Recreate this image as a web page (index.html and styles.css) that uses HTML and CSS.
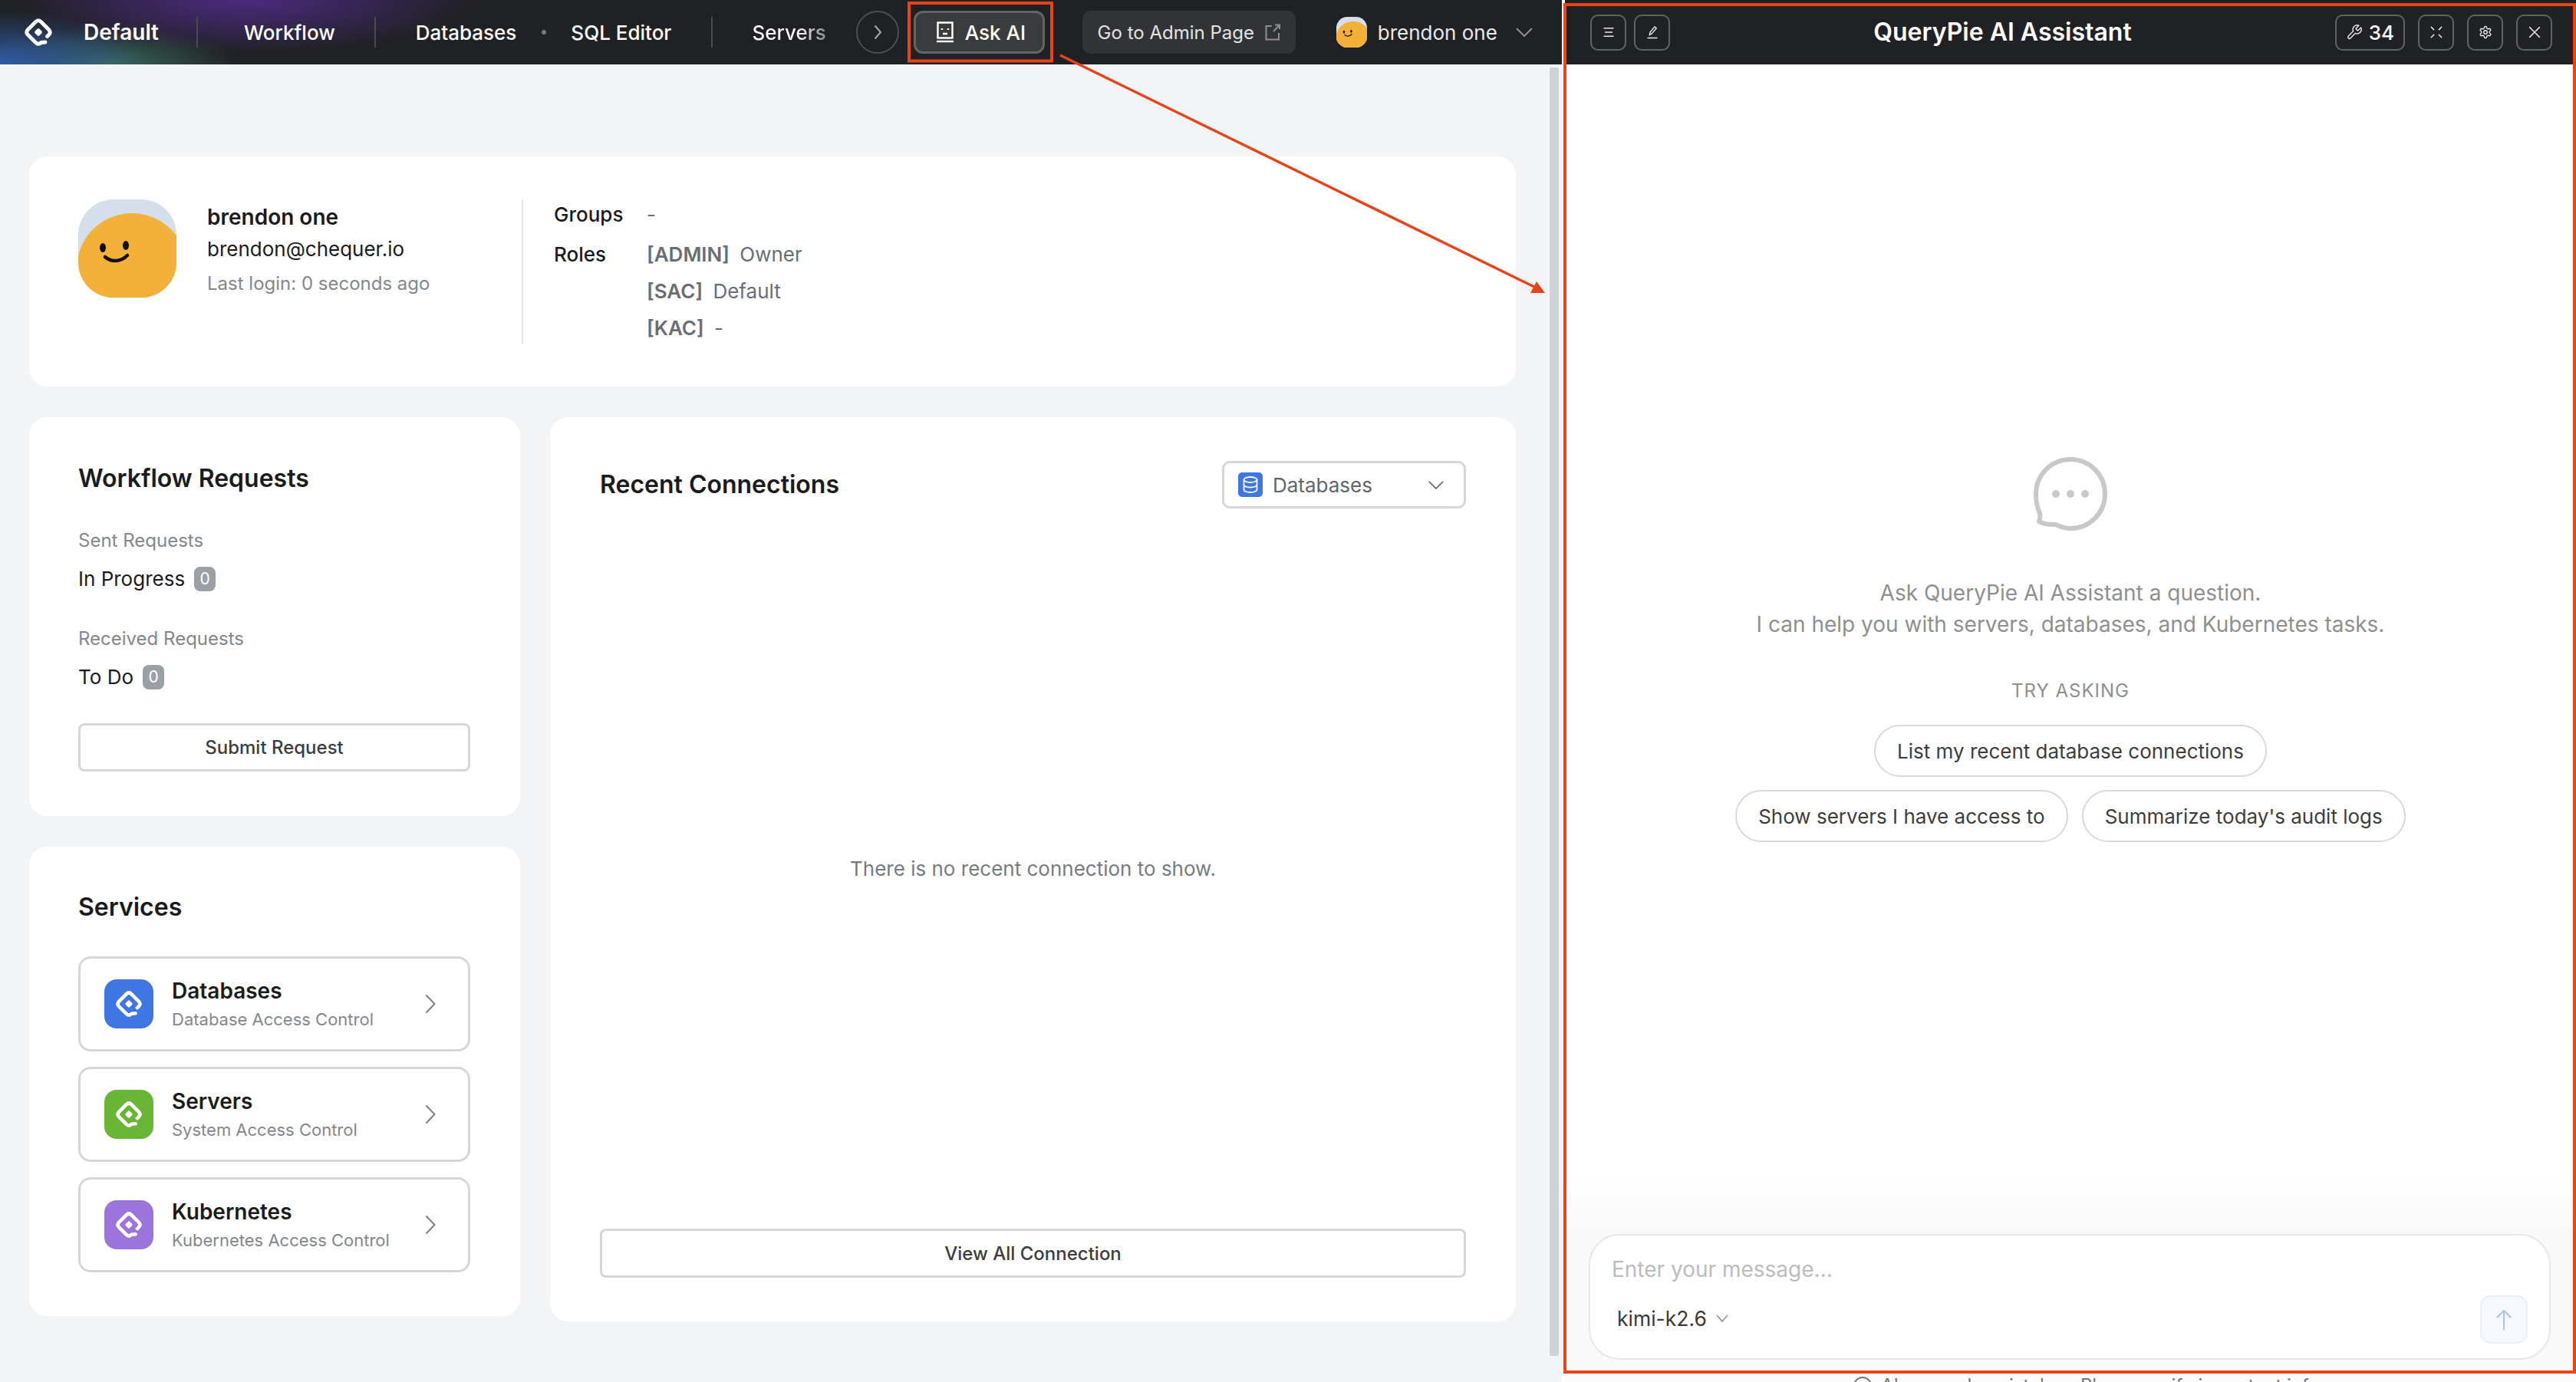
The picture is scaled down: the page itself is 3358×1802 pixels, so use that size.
FILE: index.html
```html
<!DOCTYPE html>
<html lang="en">
<head>
<meta charset="utf-8">
<title>QueryPie</title>
<link rel="stylesheet" href="styles.css">
</head>
<body>
<svg class="defs" width="0" height="0" aria-hidden="true">
  <defs>
    <symbol id="qp" viewBox="0 0 40 40">
      <path d="M29 33L23.500 33.500Q20 37 16.500 33.500L6.500 23.500Q3 20 6.500 16.500L16.500 6.500Q20 3 23.500 6.500L33.500 16.500Q37 20 33.500 23.500L31.500 25.500" fill="none" stroke="currentColor" stroke-width="4.800" stroke-linecap="round" stroke-linejoin="round"/>
      <rect x="16" y="16" width="8" height="8" rx="2" transform="rotate(45 20 20)" fill="currentColor"/>
    </symbol>
    <clipPath id="avatarClip"><rect width="128" height="128" rx="46"/></clipPath>
    <symbol id="face" viewBox="0 0 128 128">
      <g clip-path="url(#avatarClip)">
        <rect width="128" height="128" fill="#d5dfeb"/>
        <circle cx="70" cy="90" r="72" fill="#f3b13a"/>
        <rect y="90" width="128" height="38" fill="#f3b13a"/>
        <ellipse cx="32" cy="63" rx="4" ry="6" fill="#111"/>
        <ellipse cx="62" cy="60" rx="4" ry="6" fill="#111"/>
        <path d="M35 75c8 7 20 7 29-2" fill="none" stroke="#111" stroke-width="4.500" stroke-linecap="round"/>
      </g>
    </symbol>
  </defs>
</svg>

<div class="app">
  <section class="console">
    <header class="topbar">
      <svg class="logo"><use href="#qp"/></svg>
      <span class="nav-item nav-first">Default</span>
      <span class="nav-sep nav-sep-first"></span>
      <span class="nav-item">Workflow</span>
      <span class="nav-sep"></span>
      <span class="nav-item">Databases</span>
      <span class="nav-dot"></span>
      <span class="nav-item">SQL Editor</span>
      <span class="nav-sep"></span>
      <span class="nav-item nav-fade">Servers</span>
      <span class="nav-more">
        <svg viewBox="0 0 24 24"><path d="M8.500 3.500L16 12l-7.500 8.500"/></svg>
      </span>
      <button class="ask-btn">
        <svg viewBox="0 0 24 28"><path class="line" d="M2.500 1.500h19v20h-19z"/><path class="line" d="M1 26h22"/><path class="line" d="M8 9v2M16 9v2M9 16h6"/></svg>
        Ask AI
      </button>
      <button class="admin-btn">
        Go to Admin Page
        <svg viewBox="0 0 20 22"><path d="M9 3H1.500v17.500h16.500V12M11 10l8-8.500M13 1.500h6V7"/></svg>
      </button>
      <svg class="mini-avatar"><use href="#face"/></svg>
      <span class="user-name">brendon one</span>
      <svg class="user-caret" viewBox="0 0 22 12"><path d="M1 1l10 10L21 1"/></svg>
    </header>

    <main class="page">
      <div class="scroll-thumb"></div>

      <section class="card profile">
        <svg class="avatar"><use href="#face"/></svg>
        <div class="who">
          <div class="who-name">brendon one</div>
          <div class="who-mail">brendon@chequer.io</div>
          <div class="who-last">Last login: 0 seconds ago</div>
        </div>
        <div class="info">
          <div class="info-label">Groups</div>
          <div class="info-value">-</div>
          <div class="info-label info-gap">Roles</div>
          <div class="info-roles info-gap">
            <div class="info-value"><b>[ADMIN]</b> Owner</div>
            <div class="info-value"><b>[SAC]</b> Default</div>
            <div class="info-value"><b>[KAC]</b> -</div>
          </div>
        </div>
      </section>

      <div class="columns">
        <div class="col-left">
          <section class="card requests">
            <h2 class="card-title">Workflow Requests</h2>
            <div class="req-label">Sent Requests</div>
            <div class="req-row">In Progress <span class="badge">0</span></div>
            <div class="req-label req-label-2">Received Requests</div>
            <div class="req-row">To Do <span class="badge">0</span></div>
            <button class="outline-btn submit">Submit Request</button>
          </section>

          <section class="card services">
            <h2 class="card-title">Services</h2>
            <div class="svc-list">
              <a class="svc">
                <span class="svc-icon svc-blue"><svg><use href="#qp"/></svg></span>
                <span class="svc-text"><strong>Databases</strong><small>Database Access Control</small></span>
                <svg class="svc-arrow" viewBox="0 0 14 26"><path d="M1.500 1.500L12.500 13 1.500 24.500"/></svg>
              </a>
              <a class="svc">
                <span class="svc-icon svc-green"><svg><use href="#qp"/></svg></span>
                <span class="svc-text"><strong>Servers</strong><small>System Access Control</small></span>
                <svg class="svc-arrow" viewBox="0 0 14 26"><path d="M1.500 1.500L12.500 13 1.500 24.500"/></svg>
              </a>
              <a class="svc">
                <span class="svc-icon svc-purple"><svg><use href="#qp"/></svg></span>
                <span class="svc-text"><strong>Kubernetes</strong><small>Kubernetes Access Control</small></span>
                <svg class="svc-arrow" viewBox="0 0 14 26"><path d="M1.500 1.500L12.500 13 1.500 24.500"/></svg>
              </a>
            </div>
          </section>
        </div>

        <section class="card recent">
          <div class="recent-head">
            <h2 class="card-title">Recent Connections</h2>
            <div class="select">
              <span class="select-icon">
                <svg viewBox="0 0 32 32"><ellipse cx="16" cy="9.500" rx="8.500" ry="3.500"/><path d="M7.500 9.500v13c0 2 3.800 3.500 8.500 3.500s8.500-1.500 8.500-3.500v-13M7.500 16c0 2 3.800 3.500 8.500 3.500s8.500-1.500 8.500-3.500"/></svg>
              </span>
              <span class="select-text">Databases</span>
              <svg class="select-caret" viewBox="0 0 22 12"><path d="M1 1l10 10L21 1"/></svg>
            </div>
          </div>
          <div class="recent-empty">There is no recent connection to show.</div>
          <button class="outline-btn">View All Connection</button>
        </section>
      </div>
    </main>
  </section>

  <aside class="assistant">
    <header class="as-head">
      <div class="as-tools">
        <button class="tool"><svg viewBox="0 0 24 24"><path d="M4 5h16M6 12h12M4 19h16"/></svg></button>
        <button class="tool"><svg viewBox="0 0 24 24"><path d="M4 22h16M7 17l1-5L16 2.500l3 2.500-8 9.500z"/></svg></button>
      </div>
      <h1 class="as-title">QueryPie AI Assistant</h1>
      <div class="as-tools as-tools-right">
        <button class="tool tool-count"><svg class="wrench" viewBox="0 0 24 24"><path d="M14.700 6.300a1 1 0 0 0 0 1.400l1.600 1.600a1 1 0 0 0 1.400 0l3.770-3.770a6 6 0 0 1-7.940 7.940l-6.910 6.910a2.120 2.120 0 0 1-3-3l6.910-6.910a6 6 0 0 1 7.940-7.940l-3.760 3.760z"/></svg>34</button>
        <button class="tool"><svg viewBox="0 0 24 24"><path d="M3 3l4.500 4.500M21 3l-4.500 4.500M3 21l4.500-4.500M21 21l-4.500-4.500"/></svg></button>
        <button class="tool"><svg viewBox="0 0 24 24"><path d="M12.220 2h-.44a2 2 0 0 0-2 2v.18a2 2 0 0 1-1 1.730l-.43.250a2 2 0 0 1-2 0l-.15-.08a2 2 0 0 0-2.730.730l-.22.380a2 2 0 0 0 .730 2.730l.15.100a2 2 0 0 1 1 1.720v.510a2 2 0 0 1-1 1.740l-.15.090a2 2 0 0 0-.730 2.730l.22.380a2 2 0 0 0 2.730.730l.15-.08a2 2 0 0 1 2 0l.43.250a2 2 0 0 1 1 1.730V20a2 2 0 0 0 2 2h.44a2 2 0 0 0 2-2v-.18a2 2 0 0 1 1-1.730l.43-.25a2 2 0 0 1 2 0l.15.08a2 2 0 0 0 2.730-.73l.22-.39a2 2 0 0 0-.73-2.730l-.15-.08a2 2 0 0 1-1-1.740v-.5a2 2 0 0 1 1-1.740l.15-.09a2 2 0 0 0 .73-2.730l-.22-.38a2 2 0 0 0-2.730-.73l-.15.08a2 2 0 0 1-2 0l-.43-.25a2 2 0 0 1-1-1.730V4a2 2 0 0 0-2-2z"/><circle cx="12" cy="12" r="3"/></svg></button>
        <button class="tool"><svg viewBox="0 0 24 24"><path d="M3.500 3.500l17 17M20.500 3.500l-17 17"/></svg></button>
      </div>
    </header>

    <div class="as-body">
      <svg class="bubble" viewBox="0 0 96 96">
        <path d="M7 84c3-8 .8-11-1-16C3.500 61 3 55 3 48 3 23 23 3 48 3s45 20 45 45-20 45-45 45c-8 0-13-2-19-5-6 0-16 0-22-4z" fill="none" stroke="#c8c8c8" stroke-width="6" stroke-linejoin="round"/>
        <circle cx="29" cy="48" r="5" fill="#c8c8c8"/><circle cx="48" cy="48" r="5" fill="#c8c8c8"/><circle cx="67" cy="48" r="5" fill="#c8c8c8"/>
      </svg>
      <p class="as-intro">Ask QueryPie AI Assistant a question.<br>I can help you with servers, databases, and Kubernetes tasks.</p>
      <div class="as-try">TRY ASKING</div>
      <div class="chips">
        <button class="chip">List my recent database connections</button>
        <button class="chip">Show servers I have access to</button>
        <button class="chip">Summarize today's audit logs</button>
      </div>
    </div>

    <div class="as-foot">
      <div class="composer">
        <div class="composer-input">Enter your message...</div>
        <div class="composer-row">
          <span class="model">kimi-k2.6
            <svg viewBox="0 0 16 10"><path d="M1 1l7 8 7-8"/></svg>
          </span>
          <button class="send"><svg viewBox="0 0 22 28"><path d="M11 27V2M2 11l9-9 9 9"/></svg></button>
        </div>
      </div>
    </div>
    <div class="as-note"><span class="note-icon"></span>AI can make mistakes. Please verify important info.</div>
  </aside>
</div>

<svg class="marks" viewBox="0 0 3358 1802" aria-hidden="true">
  <rect class="mark-box" x="1185" y="4" width="186" height="75.500"/>
  <rect class="mark-box" x="2040" y="6" width="1316" height="1783"/>
  <line class="mark-line" x1="1382" y1="72" x2="2006" y2="377"/>
  <polygon class="mark-head" points="2003,367 2014,382 1995,382"/>
</svg>
</body>
</html>
```
FILE: styles.css
```css
* { box-sizing: border-box; }
html, body { margin: 0; height: 100%; }
body {
  width: 3358px;
  height: 1802px;
  overflow: hidden;
  position: relative;
  background: #fff;
  font-family: Inter, "Liberation Sans", sans-serif;
  color: #1a1b1d;
}
button { font: inherit; cursor: pointer; }
h1, h2, p { margin: 0; }
.defs { position: absolute; }

.app { display: flex; height: 1802px; }
.console { width: 2036px; display: flex; flex-direction: column; background: #f3f4f6; }

/* top bar */
.topbar {
  height: 84px;
  flex: none;
  display: flex;
  align-items: center;
  padding-left: 30px;
  color: #fff;
  font-size: 26px;
  font-weight: 500;
  background:
    radial-gradient(ellipse 300px 70px at 320px 0, #4b2b80 0%, rgba(75,43,128,0) 100%),
    radial-gradient(ellipse 190px 70px at 0 84px, #2f5ca8 0%, rgba(47,92,168,0) 100%),
    radial-gradient(ellipse 170px 50px at 140px 84px, #3a6a5e 0%, rgba(58,106,94,0) 100%),
    #202124;
}
.logo { width: 40px; height: 40px; color: #fff; flex: none; }
.nav-item { white-space: nowrap; }
.nav-first { margin-left: 39px; font-size: 28px; font-weight: 600; }
.nav-sep { width: 2px; height: 40px; background: #4a4b4e; margin: 0 51.500px; flex: none; }
.nav-sep-first { margin: 0 60px 0 49px; }
.nav-dot { width: 6px; height: 6px; border-radius: 50%; background: #77787b; margin: 0 32.500px; flex: none; }
.nav-fade {
  background: linear-gradient(90deg, #fff 60%, #8a8b8e 100%);
  -webkit-background-clip: text;
  background-clip: text;
  color: transparent;
}
.nav-more {
  width: 56px; height: 56px;
  margin-left: 39px;
  border: 2px solid #4d4e51;
  border-radius: 50%;
  display: flex; align-items: center; justify-content: center;
  flex: none;
}
.nav-more svg { width: 24px; height: 24px; fill: none; stroke: #a8a9ab; stroke-width: 2; }
.ask-btn {
  width: 171px; height: 56px;
  margin-left: 19px;
  display: flex; align-items: center; gap: 14px;
  padding: 0 0 0 26px;
  border: 3px solid #636466;
  border-radius: 12px;
  background: #3a3b3d;
  color: #fff;
  font-weight: 500;
  flex: none;
}
.ask-btn svg { width: 24px; height: 28px; fill: none; stroke: #fff; stroke-width: 2.400; }
.admin-btn {
  width: 278px; height: 56px;
  margin-left: 49px;
  display: flex; align-items: center; justify-content: center; gap: 14px;
  border: 0;
  border-radius: 10px;
  background: #323336;
  color: #e2e3e5;
  font-size: 24px;
  font-weight: 400;
  flex: none;
}
.admin-btn svg { width: 20px; height: 22px; fill: none; stroke: #8f9093; stroke-width: 2; }
.mini-avatar { width: 40px; height: 40px; margin-left: 53px; flex: none; }
.user-name { margin-left: 14px; color: #e8e9eb; font-weight: 400; white-space: nowrap; }
.user-caret { width: 22px; height: 12px; margin-left: 24px; fill: none; stroke: #8f9093; stroke-width: 2; flex: none; }

/* page */
.page { position: relative; flex: 1; padding: 120px 60px 0 38px; }
.scroll-thumb {
  position: absolute; top: 4px; right: 4px;
  width: 12px; height: 1680px;
  background: #d1d2d4;
  border-radius: 2px;
}
.card { background: #fff; border-radius: 24px; }

.profile { height: 300px; padding: 56px 64px; display: flex; align-items: flex-start; margin-bottom: 40px; }
.avatar { width: 128px; height: 128px; flex: none; }
.who { width: 410px; margin-left: 40px; }
.who-name { font-size: 28px; font-weight: 600; line-height: 46px; }
.who-mail { font-size: 26px; line-height: 38px; }
.who-last { font-size: 24px; line-height: 40px; margin-top: 6px; color: #83878d; }
.info {
  border-left: 2px solid #e6e7ea;
  padding-left: 40px;
  display: grid;
  grid-template-columns: 121px auto;
  font-size: 26px;
  line-height: 40px;
}
.info-label { font-weight: 500; }
.info-gap { margin-top: 12px; }
.info-roles { display: flex; flex-direction: column; gap: 8px; }
.info-value { color: #6a6e74; }
.info-value b { font-weight: 600; margin-right: 6px; }

.columns { display: flex; gap: 39px; align-items: flex-start; }
.col-left { width: 640px; display: flex; flex-direction: column; gap: 40px; flex: none; }
.card-title { font-size: 32px; font-weight: 600; line-height: 44px; }

.requests { height: 520px; padding: 58px 65px 0 64px; }
.req-label { font-size: 24px; line-height: 36px; margin-top: 41px; color: #83878d; }
.req-label-2 { margin-top: 40px; }
.req-row { display: flex; align-items: center; gap: 12px; font-size: 26px; line-height: 40px; margin-top: 12px; font-weight: 400; }
.badge {
  min-width: 28px; height: 32px;
  display: inline-flex; align-items: center; justify-content: center;
  border-radius: 8px;
  background: #9b9fa6;
  color: #fff;
  font-size: 21px;
}
.outline-btn {
  display: block;
  width: 100%;
  height: 64px;
  border: 3px solid #d5d6da;
  border-radius: 8px;
  background: #fff;
  color: #3b3d40;
  font-size: 24px;
  font-weight: 500;
}
.submit { height: 63px; margin-top: 40px; }

.services { height: 612px; padding: 57px 65px 0 64px; }
.svc-list { display: flex; flex-direction: column; gap: 20px; margin-top: 42px; }
.svc {
  height: 124px;
  display: flex; align-items: center;
  padding: 0 42px 0 31px;
  border: 3px solid #d5d6da;
  border-radius: 16px;
}
.svc-icon {
  width: 64px; height: 64px;
  border-radius: 16px;
  display: flex; align-items: center; justify-content: center;
  color: #fff;
  flex: none;
}
.svc-icon svg { width: 38px; height: 38px; }
.svc-blue { background: #3f76e4; }
.svc-green { background: #69b535; }
.svc-purple { background: #9b74dc; }
.svc-text { margin-left: 24px; flex: 1; display: flex; flex-direction: column; }
.svc-text strong { font-size: 28px; font-weight: 600; line-height: 40px; }
.svc-text small { font-size: 22px; line-height: 34px; color: #83878d; }
.svc-arrow { width: 14px; height: 26px; fill: none; stroke: #7d8086; stroke-width: 2; flex: none; }

.recent { flex: 1; height: 1179px; padding: 57px 65px 57px; display: flex; flex-direction: column; }
.recent-head { display: flex; align-items: center; justify-content: space-between; height: 62px; flex: none; }
.select {
  width: 318px; height: 62px;
  display: flex; align-items: center;
  padding: 0 26px 0 18px;
  border: 3px solid #d5d6da;
  border-radius: 10px;
}
.select-icon { width: 32px; height: 32px; background: #3f76e4; border-radius: 5px; flex: none; }
.select-icon svg { display: block; width: 32px; height: 32px; fill: none; stroke: #fff; stroke-width: 1.800; }
.select-text { margin-left: 13px; font-size: 26px; color: #61656b; flex: 1; }
.select-caret { width: 20px; height: 11px; fill: none; stroke: #6a6e74; stroke-width: 2; }
.recent-empty { flex: 1; display: flex; align-items: center; justify-content: center; font-size: 26px; color: #777b81; }

/* assistant */
.assistant { width: 1322px; border-left: 4px solid #fff; display: flex; flex-direction: column; background: #fff; }
.as-head {
  height: 84px; flex: none;
  display: flex; align-items: center;
  padding: 0 31px 0 33px;
  background: #202124;
}
.as-title {
  flex: 1;
  text-align: center;
  font-size: 32px; font-weight: 600; line-height: 84px;
  color: #fff;
}
.as-tools { display: flex; gap: 10px; }
.as-tools-right { gap: 17px; }
.tool {
  width: 47px; height: 47px;
  display: flex; align-items: center; justify-content: center;
  padding: 0;
  border: 2px solid #616265;
  border-radius: 10px;
  background: transparent;
  color: #fff;
  font-size: 26px;
  font-weight: 500;
}
.tool svg { width: 18px; height: 18px; fill: none; stroke: #e8e8e8; stroke-width: 1.900; stroke-linecap: round; stroke-linejoin: round; }
.tool svg.wrench { width: 22px; height: 22px; stroke-width: 1.600; }
.tool-count { width: 91px; gap: 8px; }
.as-body { flex: 1; min-height: 0; padding-top: 512px; display: flex; flex-direction: column; align-items: center; }
.bubble { width: 96px; height: 96px; flex: none; }
.as-intro { margin-top: 61px; text-align: center; font-size: 28px; line-height: 41px; color: #8f8f8f; }
.as-try { margin-top: 48px; font-size: 24px; line-height: 36px; letter-spacing: 1px; color: #8f8f8f; }
.chips { margin-top: 26px; width: 880px; display: flex; flex-wrap: wrap; justify-content: center; gap: 17px 18px; }
.chip {
  height: 68px;
  padding: 0 28px;
  border: 2px solid #d9d9d9;
  border-radius: 34px;
  background: #fff;
  color: #3d3d3d;
  font-size: 26px;
}
.as-foot {
  flex: none;
  padding: 79px 33px 16px 31px;
  background: linear-gradient(#fff 0, #f9f9f9 79px);
}
.composer {
  height: 164px;
  padding: 24px 28px 19px;
  background: #fff;
  border: 2px solid #e7e7e7;
  border-radius: 40px;
}
.composer-input { font-size: 28px; line-height: 40px; color: #bcbcbc; }
.composer-row { margin-top: 14px; height: 63px; display: flex; align-items: center; justify-content: space-between; }
.model { margin-left: 7px; padding-bottom: 3px; display: flex; align-items: center; gap: 12px; font-size: 26.500px; color: #3a3a3a; }
.model svg { width: 16px; height: 10px; fill: none; stroke: #8f8f8f; stroke-width: 1.500; }
.send {
  width: 62px; height: 63px;
  display: flex; align-items: center; justify-content: center;
  padding: 0;
  border: 2px solid #e9effd;
  border-radius: 14px;
  background: #f6f8fe;
}
.send svg { width: 22px; height: 28px; fill: none; stroke: #a5c3f7; stroke-width: 2; }
.as-note {
  flex: none;
  height: 13px;
  overflow: hidden;
  padding-left: 376px;
  background: #fafafa;
  display: flex;
  font-size: 24px;
  line-height: 36px;
  color: #777;
  white-space: nowrap;
}
.note-icon { width: 24px; height: 24px; margin: 6px 12px 0 0; border: 2px solid #777; border-radius: 50%; flex: none; }

/* annotation overlay */
.marks { position: absolute; left: 0; top: 0; width: 3358px; height: 1802px; pointer-events: none; }
.mark-box { fill: none; stroke: #e8441c; stroke-width: 4; }
.mark-line { stroke: #e8441c; stroke-width: 3.500; }
.mark-head { fill: #e8441c; }
```
